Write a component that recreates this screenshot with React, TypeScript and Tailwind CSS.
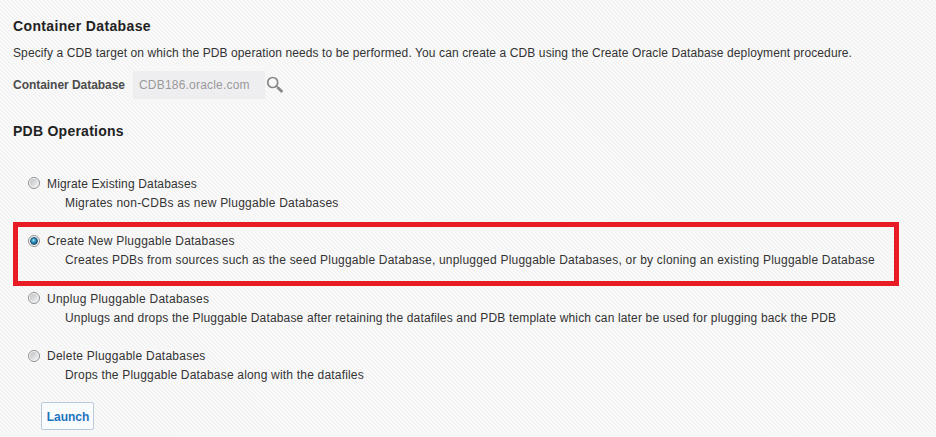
import React from "react";

type Operation = {
  title: string;
  titleSpacing: string;
  description: string;
  descriptionSpacing: string;
  rowPadding: string;
  radioOffset: string;
  selected?: boolean;
};

const operations: Operation[] = [
  {
    title: "Migrate Existing Databases",
    titleSpacing: "tracking-[0.15px]",
    description: "Migrates non-CDBs as new Pluggable Databases",
    descriptionSpacing: "tracking-[0.23px]",
    rowPadding: "pt-[5px]",
    radioOffset: "mb-px",
  },
  {
    title: "Create New Pluggable Databases",
    titleSpacing: "tracking-[0.23px]",
    description:
      "Creates PDBs from sources such as the seed Pluggable Database, unplugged Pluggable Databases, or by cloning an existing Pluggable Database",
    descriptionSpacing: "tracking-[0.208px]",
    rowPadding: "pt-1",
    radioOffset: "mt-px",
    selected: true,
  },
  {
    title: "Unplug Pluggable Databases",
    titleSpacing: "tracking-[0.26px]",
    description:
      "Unplugs and drops the Pluggable Database after retaining the datafiles and PDB template which can later be used for plugging back the PDB",
    descriptionSpacing: "tracking-[0.156px]",
    rowPadding: "pt-[5px]",
    radioOffset: "mb-px",
  },
  {
    title: "Delete Pluggable Databases",
    titleSpacing: "tracking-[0.25px]",
    description: "Drops the Pluggable Database along with the datafiles",
    descriptionSpacing: "tracking-[0.19px]",
    rowPadding: "pt-1",
    radioOffset: "mt-px",
  },
];

function Radio({ selected, offset }: { selected?: boolean; offset: string }) {
  return (
    <span className={`flex size-3 shrink-0 items-center justify-center rounded-full border border-[#8e9092] bg-[#f6f6f6] ${offset}`}>
      {selected ? (
        <span className="size-2 rounded-full border border-[#24516f] bg-[radial-gradient(circle_at_42%_38%,#9be6f8_0,#2389b6_45%,#0b3f63_100%)]" />
      ) : (
        <span className="size-2 rounded-full bg-[linear-gradient(135deg,#bcc0c3,#f4f4f4)]" />
      )}
    </span>
  );
}

function OperationRow({ operation }: { operation: Operation }) {
  const frame = operation.selected ? "border-[#e81c24]" : "border-transparent";
  return (
    <div className={`h-16 w-[886px] border-5 pl-[10px] ${operation.rowPadding} ${frame}`}>
      <div className="flex h-[19px] items-center">
        <Radio selected={operation.selected} offset={operation.radioOffset} />
        <span className={`ml-[7px] whitespace-nowrap ${operation.titleSpacing}`}>{operation.title}</span>
      </div>
      <div className={`h-[19px] whitespace-nowrap pl-[37px] leading-[21px] ${operation.descriptionSpacing}`}>
        {operation.description}
      </div>
    </div>
  );
}

export default function App() {
  return (
    <main className="h-[437px] w-[936px] overflow-hidden bg-[#f8f8f8] bg-[repeating-linear-gradient(45deg,#f1f1f2_0,#fcfcfc_1.414px,#f1f1f2_2.828px)] pl-[13px] pt-4 font-['Liberation_Sans',Arial,sans-serif] text-[12px] text-[#333]">
      <h1 className="h-5 whitespace-nowrap text-[14px] font-bold leading-5 tracking-[0.36px] text-[#222]">Container Database</h1>
      <p className="mt-[7px] h-5 whitespace-nowrap leading-5 tracking-[0.104px]">
        Specify a CDB target on which the PDB operation needs to be performed. You can create a CDB using the Create Oracle Database deployment procedure.
      </p>
      <div className="mt-2 flex h-7 items-center">
        <span className="w-[120px] whitespace-nowrap font-bold tracking-[-0.04px] text-[#4c4c4c]">Container Database</span>
        <span className="flex h-7 w-[132px] items-center bg-[#eeeef0] pl-[6px] tracking-[0.2px] text-[#9a9a9a]">CDB186.oracle.com</span>
        <svg className="ml-px size-[18px]" viewBox="0 0 18 18" fill="none" stroke="#878787">
          <circle cx="6.7" cy="6.5" r="5" strokeWidth="1.7" />
          <path d="M10.2 10l1.5 1.5" strokeWidth="1.5" />
          <path d="M11.5 11.3l4.8 4.8" strokeWidth="2.8" />
        </svg>
      </div>
      <h2 className="mt-[22px] h-5 whitespace-nowrap text-[14px] font-bold leading-5 tracking-[0.25px] text-[#222]">PDB Operations</h2>
      <div className="mt-[23px] grid grid-rows-[58px_57px_58px_58px]">
        {operations.map((operation) => (
          <OperationRow key={operation.title} operation={operation} />
        ))}
      </div>
      <button className="ml-7 mt-[7px] h-7 w-[53px] whitespace-nowrap rounded-xs border border-[#bccbd9] bg-[#f9fbfd] pl-px pt-px font-bold leading-[26px] text-[#1c74bd]">Launch</button>
    </main>
  );
}
